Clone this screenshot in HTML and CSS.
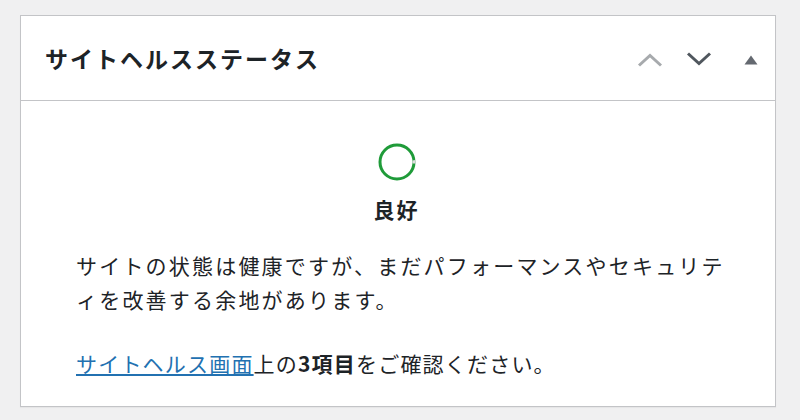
FILE: index.html
```html
<!DOCTYPE html>
<html lang="ja">
<head>
    <meta charset="UTF-8">
    <title>サイトヘルスステータス</title>
    <link rel="stylesheet" href="styles.css">
</head>
<body>
    <div class="postbox">
        <div class="postbox-header">
            <h2 class="postbox-title">サイトヘルスステータス</h2>
            <div class="handle-actions">
                <button class="handle up" aria-label="上へ移動">
                    <svg width="26" height="14" viewBox="0 0 26 14"><path d="M2 12.5 L13 2.5 L24 12.5" fill="none" stroke="currentColor" stroke-width="3"/></svg>
                </button>
                <button class="handle down" aria-label="下へ移動">
                    <svg width="26" height="14" viewBox="0 0 26 14"><path d="M2 1.5 L13 11.5 L24 1.5" fill="none" stroke="currentColor" stroke-width="3"/></svg>
                </button>
                <button class="handle toggle" aria-label="パネルを切り替え">
                    <svg width="14" height="10" viewBox="0 0 14 10"><path d="M7 0.5 L13.5 9.5 L0.5 9.5 Z" fill="currentColor"/></svg>
                </button>
            </div>
        </div>
        <div class="inside">
            <div class="health-status">
                <svg class="health-ring" width="40" height="40" viewBox="0 0 40 40">
                    <circle cx="20" cy="20" r="17" fill="none" stroke="#1f9b39" stroke-width="3"/>
                    <path d="M36.9 18.2 A17 17 0 0 1 37 21.5" fill="none" stroke="#dcdcde" stroke-width="3"/>
                </svg>
                <div class="health-label">良好</div>
            </div>
            <p class="health-text">サイトの状態は健康ですが、まだパフォーマンスやセキュリティを改善する余地があります。</p>
            <p class="health-text"><a href="#">サイトヘルス画面</a>上の<strong>3項目</strong>をご確認ください。</p>
        </div>
    </div>
</body>
</html>
```

FILE: styles.css
```css
body {
    margin: 0;
    background-color: #f0f0f1;
    font-family: "Noto Sans CJK JP", "Noto Sans", sans-serif;
    color: #1d2327;
}

.postbox {
    margin: 15px 24px 14px 20px;
    background-color: #fff;
    border: 1px solid #c3c4c7;
    box-shadow: 0 1px 1px rgba(0, 0, 0, 0.04);
}

.postbox-header {
    display: flex;
    align-items: center;
    height: 84px;
    padding: 0 17px 0 24px;
    border-bottom: 1px solid #c3c4c7;
}

.postbox-title {
    flex: 1;
    margin: 0;
    font-size: 23px;
    font-weight: bold;
    letter-spacing: 2px;
    line-height: 30px;
}

.handle-actions {
    display: flex;
    align-items: center;
}

.handle {
    display: flex;
    padding: 0;
    border: none;
    background: none;
    cursor: pointer;
}

.handle.up {
    color: #a7aaad;
    margin-top: 3px;
}

.handle.down {
    color: #50575e;
    margin-left: 23px;
    margin-top: 2px;
}

.handle.toggle {
    color: #646970;
    margin-left: 32px;
    margin-top: 3px;
}

.inside {
    padding: 41px 34px 26px 55px;
}

.health-status {
    display: flex;
    flex-direction: column;
    align-items: center;
    margin-left: -24px;
    margin-bottom: 24px;
}

.health-ring {
    display: block;
}

.health-label {
    margin-top: 12px;
    font-size: 21px;
    font-weight: bold;
    letter-spacing: 2px;
    line-height: 30px;
}

.health-text {
    margin: 0 0 30px;
    font-size: 21px;
    letter-spacing: 2.2px;
    line-height: 34px;
}

.health-text:last-child {
    margin-bottom: 0;
    letter-spacing: 1.2px;
}

.health-text a {
    color: #2271b1;
    text-decoration: underline;
}

.health-text strong {
    font-weight: bold;
}
```
